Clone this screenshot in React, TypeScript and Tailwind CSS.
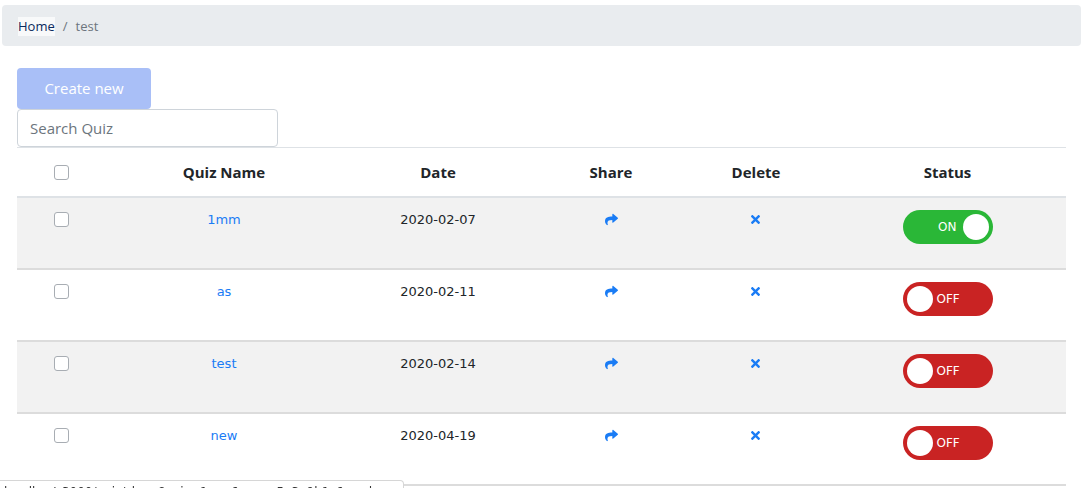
import React from "react";

const quizzes = [
  { name: "1mm", date: "2020-02-07", on: true },
  { name: "as", date: "2020-02-11", on: false },
  { name: "test", date: "2020-02-14", on: false },
  { name: "new", date: "2020-04-19", on: false },
];

function ShareIcon() {
  return (
    <svg viewBox="0 0 512 512" className="w-[13px] h-[13px]" fill="#1a7cf5">
      <path d="M503.691 189.836L327.687 37.851C312.281 24.546 288 35.347 288 56.015v80.053C127.371 137.907 0 170.1 0 322.326c0 61.441 39.581 122.309 83.333 154.132 13.653 9.931 33.111-2.533 28.077-18.631C66.066 312.814 132.917 274.316 288 272.085V360c0 20.7 24.3 31.453 39.687 18.164l176.004-152c11.071-9.562 11.086-26.753 0-36.328z" />
    </svg>
  );
}

function TimesIcon() {
  return (
    <svg viewBox="0 0 352 512" className="w-[9px] h-[13px]" fill="#1a7cf5">
      <path d="M242.72 256l100.07-100.07c12.28-12.28 12.28-32.19 0-44.48l-22.24-22.24c-12.28-12.28-32.19-12.28-44.48 0L176 189.28 75.93 89.21c-12.28-12.28-32.19-12.28-44.48 0L9.21 111.45c-12.28 12.28-12.28 32.19 0 44.48L109.28 256 9.21 356.07c-12.28 12.28-12.28 32.19 0 44.48l22.24 22.24c12.28 12.28 32.2 12.28 44.48 0L176 322.72l100.07 100.07c12.28 12.28 32.2 12.28 44.48 0l22.24-22.24c12.28-12.28 12.28-32.19 0-44.48L242.72 256z" />
    </svg>
  );
}

function Toggle({ on }: { on: boolean }) {
  return on ? (
    <div className="w-[90px] h-[34px] rounded-full bg-[#2ab737] flex items-center justify-end pr-[4px] gap-[6px]">
      <span className="text-white text-[12px] leading-none">ON</span>
      <span className="w-[26px] h-[26px] rounded-full bg-white" />
    </div>
  ) : (
    <div className="w-[90px] h-[34px] rounded-full bg-[#c92323] flex items-center pl-[4px] gap-[4px]">
      <span className="w-[26px] h-[26px] rounded-full bg-white" />
      <span className="text-white text-[12px] leading-none">OFF</span>
    </div>
  );
}

function Checkbox() {
  return <span className="block w-[15px] h-[15px] rounded-[3px] border border-[#a8adb3] bg-white" />;
}

export default function App() {
  return (
    <div className="relative min-h-[488px] bg-white text-[#212529] font-['Open_Sans',sans-serif] pt-[5px]">
      <div className="ml-[2px] mr-[3px] h-[41px] rounded-[4px] bg-[#e9ecef] flex items-center pl-[16px] pt-[2px] text-[13px]">
        <span className="text-[#0a2a5e] bg-[#f8f9fa]">Home</span>
        <span className="text-[#6c757d] px-[8px]">/</span>
        <span className="text-[#6c757d]">test</span>
      </div>

      <div className="pl-[17px] pr-[18px] pt-[22px]">
        <button className="w-[134px] h-[41px] rounded-[4px] bg-[#a9bff7] text-white text-[15px]">
          Create new
        </button>
        <div className="w-[261px] h-[38px] rounded-[4px] border border-[#ced4da] flex items-center pl-[12px] text-[15px] text-[#6c757d]">
          Search Quiz
        </div>

        <div className="border-t border-[#dee2e6]">
          <div className="grid grid-cols-[88px_238px_190px_156px_140px_1fr] h-[50px] pt-[1px] items-center border-b-2 border-[#dee2e6] font-bold text-[15px] text-center">
            <div className="flex justify-center"><Checkbox /></div>
            <div>Quiz Name</div>
            <div>Date</div>
            <div>Share</div>
            <div className="pr-[6px]">Delete</div>
            <div>Status</div>
          </div>
          {quizzes.map((q, i) => (
            <div
              key={q.name}
              className={`grid grid-cols-[88px_238px_190px_156px_140px_1fr] h-[72px] border-b-2 border-[#dcdcdc] text-[13px] text-center font-['DejaVu_Sans',sans-serif] ${
                i % 2 === 0 ? "bg-[#f2f2f2]" : "bg-white"
              }`}
            >
              <div className="flex justify-center pt-[14px]"><Checkbox /></div>
              <div className="pt-[12px] leading-[20px] text-[#1a7cf5]">{q.name}</div>
              <div className="pt-[12px] leading-[20px]">{q.date}</div>
              <div className="flex justify-center pt-[15px]"><ShareIcon /></div>
              <div className="flex justify-center pt-[15px] pr-[7px]"><TimesIcon /></div>
              <div className="flex justify-center pt-[12px]"><Toggle on={q.on} /></div>
            </div>
          ))}
        </div>
      </div>

      <div className="fixed left-0 top-[480px] w-[404px] h-[20px] overflow-hidden rounded-tr-[4px] border border-l-0 border-[#d6d6d6] bg-white pl-[4px] pt-[4px] text-[12px] leading-[14px] text-[#333] font-['DejaVu_Sans',sans-serif] whitespace-nowrap">
        localhost:3000/quiz/share?quiz=1mm&amp;user=5e3a9b1c&amp;mode=public
      </div>
    </div>
  );
}
